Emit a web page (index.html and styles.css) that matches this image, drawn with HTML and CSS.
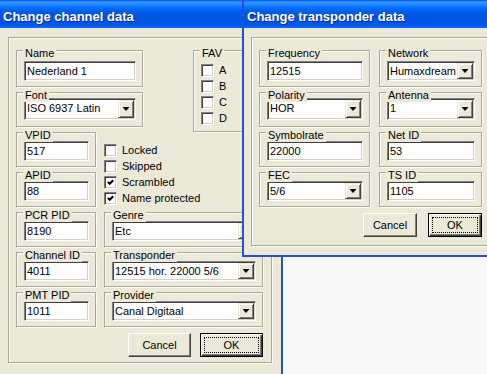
FILE: index.html
```html
<!DOCTYPE html>
<html>
<head>
    <title>Change channel data</title>
    <link rel="stylesheet" href="styles.css">
</head>
<body>
    <div class="window win-channel">
        <div class="titlebar">Change channel data</div>
        <div class="panel">
            <div class="channel-grid">
                <div class="group g-name pad-wide">
                    <span class="group-label">Name</span>
                    <div class="field">Nederland 1</div>
                </div>
                <div class="group g-font pad-tight">
                    <span class="group-label">Font</span>
                    <div class="combo combo-tall"><span class="combo-text">ISO 6937 Latin</span><span class="drop"></span></div>
                </div>
                <div class="group g-fav">
                    <span class="group-label">FAV</span>
                    <div class="check"><span class="box"></span>A</div>
                    <div class="check"><span class="box"></span>B</div>
                    <div class="check"><span class="box"></span>C</div>
                    <div class="check"><span class="box"></span>D</div>
                </div>

                <div class="group g-vpid">
                    <span class="group-label">VPID</span>
                    <div class="field">517</div>
                </div>
                <div class="group g-apid">
                    <span class="group-label">APID</span>
                    <div class="field">88</div>
                </div>
                <div class="group g-pcr">
                    <span class="group-label">PCR PID</span>
                    <div class="field">8190</div>
                </div>
                <div class="group g-chid">
                    <span class="group-label">Channel ID</span>
                    <div class="field">4011</div>
                </div>
                <div class="group g-pmt">
                    <span class="group-label">PMT PID</span>
                    <div class="field">1011</div>
                </div>

                <div class="checks">
                    <div class="check"><span class="box"></span>Locked</div>
                    <div class="check"><span class="box"></span>Skipped</div>
                    <div class="check"><span class="box"><svg width="7" height="7" viewBox="0 0 7 7"><polyline points="0.9,3 2.7,4.8 6.2,1.3" fill="none" stroke="#000" stroke-width="2"/></svg></span>Scrambled</div>
                    <div class="check"><span class="box"><svg width="7" height="7" viewBox="0 0 7 7"><polyline points="0.9,3 2.7,4.8 6.2,1.3" fill="none" stroke="#000" stroke-width="2"/></svg></span>Name protected</div>
                </div>

                <div class="group g-genre">
                    <span class="group-label">Genre</span>
                    <div class="combo"><span class="combo-text">Etc</span><span class="drop"></span></div>
                </div>
                <div class="group g-tp">
                    <span class="group-label">Transponder</span>
                    <div class="combo"><span class="combo-text">12515 hor. 22000 5/6</span><span class="drop"></span></div>
                </div>
                <div class="group g-prov">
                    <span class="group-label">Provider</span>
                    <div class="combo"><span class="combo-text">Canal Digitaal</span><span class="drop"></span></div>
                </div>
            </div>
            <div class="buttons">
                <div class="btn btn-wide">Cancel</div>
                <div class="btn btn-wide btn-default">OK</div>
            </div>
        </div>
    </div>

    <div class="window win-transponder">
        <div class="titlebar">Change transponder data</div>
        <div class="panel">
            <div class="tp-grid">
                <div class="group col-a pad-wide">
                    <span class="group-label">Frequency</span>
                    <div class="field">12515</div>
                </div>
                <div class="group col-b pad-wide">
                    <span class="group-label">Network</span>
                    <div class="combo"><span class="combo-text">Humaxdream</span><span class="drop"></span></div>
                </div>
                <div class="group col-a pad-tight">
                    <span class="group-label">Polarity</span>
                    <div class="combo combo-tall"><span class="combo-text">HOR</span><span class="drop"></span></div>
                </div>
                <div class="group col-b pad-tight">
                    <span class="group-label">Antenna</span>
                    <div class="combo combo-tall"><span class="combo-text">1</span><span class="drop"></span></div>
                </div>
                <div class="group col-a">
                    <span class="group-label">Symbolrate</span>
                    <div class="field">22000</div>
                </div>
                <div class="group col-b">
                    <span class="group-label">Net ID</span>
                    <div class="field">53</div>
                </div>
                <div class="group col-a">
                    <span class="group-label">FEC</span>
                    <div class="combo"><span class="combo-text">5/6</span><span class="drop"></span></div>
                </div>
                <div class="group col-b">
                    <span class="group-label">TS ID</span>
                    <div class="field">1105</div>
                </div>
            </div>
            <div class="buttons">
                <div class="btn btn-narrow">Cancel</div>
                <div class="btn btn-narrow btn-default">OK</div>
            </div>
        </div>
    </div>
</body>
</html>
```

FILE: styles.css
```css
body {
    margin: 0;
    width: 487px;
    height: 374px;
    overflow: hidden;
    position: relative;
    background: #f6f7f8;
    font-family: "Liberation Sans", Arial, sans-serif;
    font-size: 11px;
    color: #000;
}

/* windows sit on the desktop */
.window {
    position: absolute;
    top: 0;
    box-sizing: border-box;
    background: #ece9d8;
}
.win-channel {
    left: 0;
    width: 283px;
    height: 390px;
    border-right: 2px solid #2452c9;
}
.win-transponder {
    left: 242px;
    width: 256px;
    height: 257px;
    border-left: 2px solid #2452c9;
    border-bottom: 2px solid #2452c9;
}

.titlebar {
    height: 28px;
    box-sizing: border-box;
    padding: 5px 0 0 3px;
    line-height: 23px;
    font-size: 13px;
    font-weight: bold;
    color: #fff;
    white-space: nowrap;
    text-shadow: 1px 1px 0 #0c2a8a;
    background: linear-gradient(to bottom,
        #0058ee 0px, #3a93ff 2px, #288eff 4px, #127dff 6px, #036ffc 8px,
        #0262ee 10px, #0057e5 14px, #0054e3 20px, #0055eb 24px,
        #005bf5 26px, #026afe 27px, #0062ef 28px);
}

/* etched frames */
.panel,
.group {
    border: 1px solid #aca899;
    box-shadow: inset 1px 1px 0 #fff, 1px 1px 0 #fff;
}
.panel {
    margin-top: 9px;
    box-sizing: border-box;
}
.win-channel .panel {
    margin-left: 8px;
    width: 264px;
    height: 326px;
    padding: 12px 8px 0 7px;
}
.win-transponder .panel {
    margin-left: 7px;
    width: 250px;
    height: 209px;
    padding: 12px 0 0 7px;
}

.channel-grid {
    display: grid;
    grid-template-columns: 80px 8px 39px 50px 70px;
    grid-template-rows: 37px repeat(6, 35px);
    row-gap: 5px;
}
.tp-grid {
    display: grid;
    width: 223px;
    grid-template-columns: 111px 9px 103px;
    grid-template-rows: 37px repeat(3, 35px);
    row-gap: 5px;
}
.col-a { grid-column: 1; }
.col-b { grid-column: 3; }

.g-name { grid-column: 1 / 4; grid-row: 1; }
.g-font { grid-column: 1 / 4; grid-row: 2; }
.g-fav { grid-column: 5 / 6; grid-row: 1 / 3; margin-bottom: -5px; padding-top: 13px !important; }
.g-vpid { grid-column: 1; grid-row: 3; }
.g-apid { grid-column: 1; grid-row: 4; }
.g-pcr { grid-column: 1; grid-row: 5; }
.g-chid { grid-column: 1; grid-row: 6; }
.g-pmt { grid-column: 1; grid-row: 7; }
.checks { grid-column: 3 / 6; grid-row: 3 / 5; padding-top: 12px; }
.g-genre { grid-column: 3 / 6; grid-row: 5; }
.g-tp { grid-column: 3 / 6; grid-row: 6; }
.g-prov { grid-column: 3 / 6; grid-row: 7; }

.group {
    position: relative;
    padding: 8px 6px 0 7px;
}
.group.pad-wide { padding-top: 10px; }
.group.pad-tight { padding-top: 5px; }
.group-label {
    position: absolute;
    top: -4px;
    left: 6px;
    padding: 0 2px;
    line-height: 13px;
    background: #ece9d8;
    white-space: nowrap;
}

/* sunken edit boxes */
.field,
.combo,
.box {
    box-sizing: border-box;
    background: #fff;
    border: 1px solid;
    border-color: #808080 #fff #fff #808080;
    box-shadow: inset 1px 1px 0 #404040, inset -1px -1px 0 #d4d0c8;
}
.field {
    height: 20px;
    padding: 0 2px;
    line-height: 18px;
    white-space: nowrap;
    overflow: hidden;
}
.combo {
    display: flex;
    height: 20px;
}
.combo-tall { height: 22px; }
.combo-text {
    flex: 1;
    padding-left: 2px;
    line-height: 18px;
    white-space: nowrap;
    overflow: hidden;
}
.drop {
    width: 16px;
    margin: 1px;
    box-sizing: border-box;
    background: #ece9d8;
    border: 1px solid;
    border-color: #ece9d8 #404040 #404040 #ece9d8;
    box-shadow: inset 1px 1px 0 #fff, inset -1px -1px 0 #808080;
    display: flex;
    align-items: center;
    justify-content: center;
}
.drop::after {
    content: "";
    width: 7px;
    height: 4px;
    background: #000;
    clip-path: polygon(0 0, 100% 0, 50% 100%);
}

.check {
    display: flex;
    align-items: flex-start;
    gap: 5px;
    height: 16px;
    line-height: 13px;
    white-space: nowrap;
}
.box {
    width: 13px;
    height: 13px;
    flex: none;
    display: flex;
    align-items: center;
    justify-content: center;
}

.buttons {
    display: flex;
    justify-content: flex-end;
    margin-top: 6px;
}
.win-channel .buttons { width: 247px; gap: 9px; }
.win-transponder .buttons { width: 223px; gap: 11px; }

.btn {
    height: 24px;
    box-sizing: border-box;
    display: flex;
    align-items: center;
    justify-content: center;
    background: #ece9d8;
    border: 1px solid;
    border-color: #fff #404040 #404040 #fff;
    box-shadow: inset -1px -1px 0 #808080;
}
.btn-wide { width: 63px; }
.btn-narrow { width: 54px; }
.btn-default {
    border-color: #000;
    box-shadow: inset 1px 1px 0 #fff, inset -1px -1px 0 #404040, inset -2px -2px 0 #808080;
    outline: 1px dotted #000;
    outline-offset: -5px;
}
```
